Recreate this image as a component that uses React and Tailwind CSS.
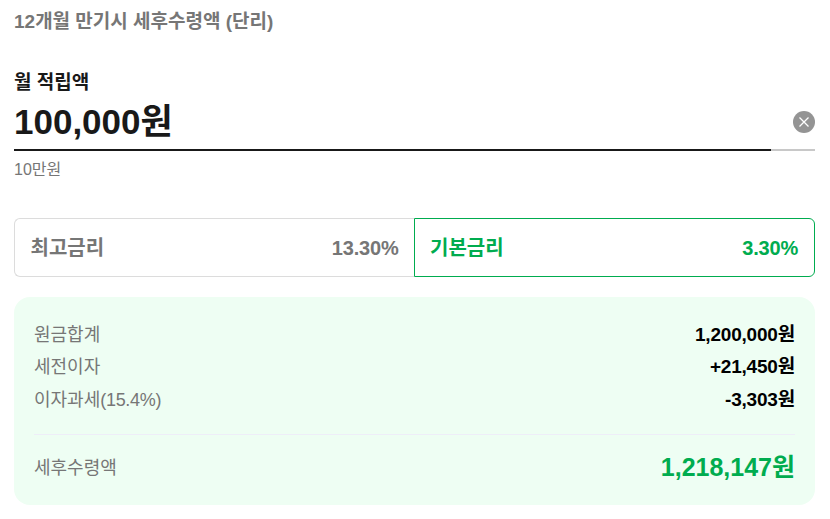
import React from 'react';

const font = { fontFamily: '"Liberation Sans", "Noto Sans CJK KR", sans-serif' };

const rows = [
  ['원금합계', '', '1,200,000원'],
  ['세전이자', '', '+21,450원'],
  ['이자과세', '(15.4%)', '-3,303원'],
];

export default function App() {
  return (
    <div style={font} className="w-[830px] h-[519px] overflow-hidden bg-white pl-[14px] pr-[15px] pt-[9px]">
      <h2 className="text-[19px] leading-[26px] font-bold text-[#767676]">12개월 만기시 세후수령액 (단리)</h2>

      <div className="mt-[35px] text-[19px] leading-[26px] font-bold text-[#191919]">월 적립액</div>

      <div className="mt-[3px] flex items-center justify-between h-[46px]">
        <span className="text-[35px] leading-[46px] font-bold text-[#191919]">100,000원</span>
        <button className="w-[22px] h-[22px] rounded-full bg-[#949494] flex items-center justify-center">
          <svg width="12" height="12" viewBox="0 0 12 12" fill="none" stroke="#fff" strokeWidth="1.3">
            <path d="M1.5 1.5l9 9M10.5 1.5l-9 9" />
          </svg>
        </button>
      </div>

      <div className="mt-[4px] h-[2px] bg-[#c8c8c8]">
        <div className="h-full w-[757px] bg-[#191919]"></div>
      </div>

      <div className="mt-[7px] text-[16px] leading-[24px] text-[#767676]">10만원</div>

      <div className="mt-[36px] flex h-[59px]">
        <button className="flex-1 flex items-center justify-between pl-[15.5px] pr-[15px] border border-[#dcdcdc] border-r-0 rounded-l-[6px]">
          <span className="text-[20px] font-bold text-[#767676]">최고금리</span>
          <span className="text-[20px] font-bold tracking-[-0.2px] text-[#767676]">13.30%</span>
        </button>
        <button className="flex-1 flex items-center justify-between pl-[15.5px] pr-[16px] border border-[#00ac4f] rounded-r-[6px]">
          <span className="text-[20px] font-bold text-[#00ac4f]">기본금리</span>
          <span className="text-[20px] font-bold tracking-[-0.2px] text-[#00ac4f]">3.30%</span>
        </button>
      </div>

      <div className="mt-[20px] h-[208px] rounded-[16px] bg-[#eefef3] px-[20px] pt-[25px]">
        <div className="flex flex-col gap-[6.5px]">
          {rows.map(([label, note, value]) => (
            <div key={label} className="flex items-center justify-between h-[26px]">
              <span className="text-[18px] text-[#767676]">
                {label}
                <span className="tracking-[-0.3px]">{note}</span>
              </span>
              <span className="text-[19px] font-bold tracking-[-0.2px] text-black">{value}</span>
            </div>
          ))}
        </div>
        <div className="mt-[21px] border-t border-[#eeeef8]"></div>
        <div className="mt-[17px] flex items-center justify-between h-[32px]">
          <span className="text-[18px] text-[#767676]">세후수령액</span>
          <span className="text-[25px] font-bold text-[#00ac4f]">1,218,147원</span>
        </div>
      </div>
    </div>
  );
}
